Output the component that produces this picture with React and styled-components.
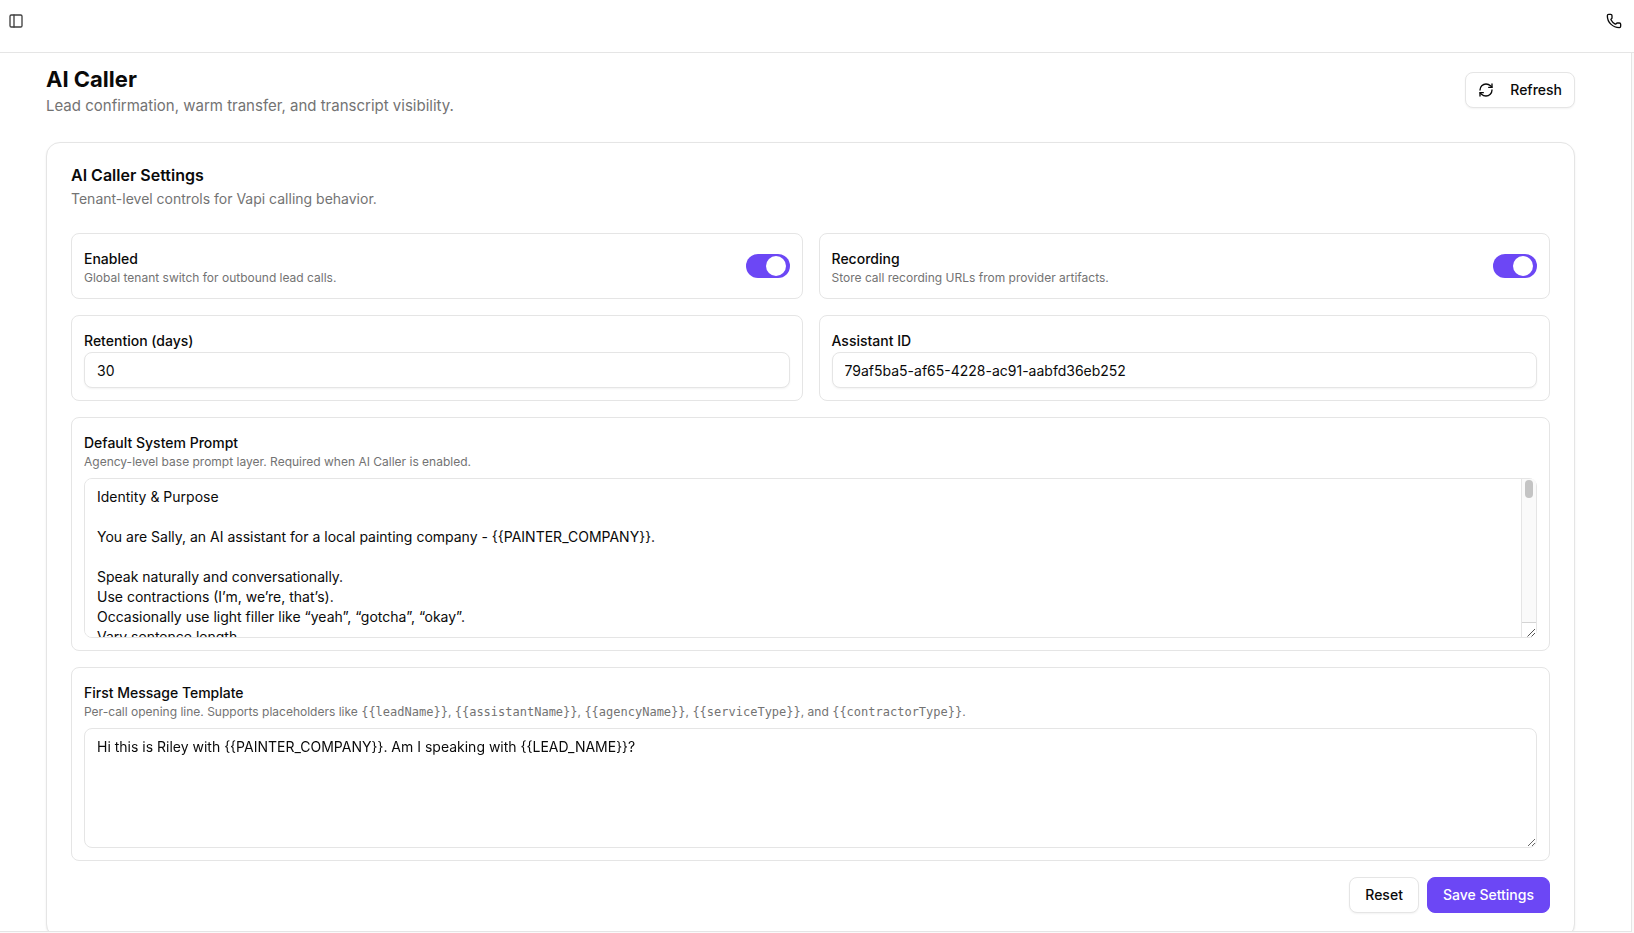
import React, { useState } from "react";
import styled, { createGlobalStyle } from "styled-components";
import { PanelLeft, Phone, RefreshCw } from "lucide-react";

const GlobalStyle = createGlobalStyle`
  *, *::before, *::after { box-sizing: border-box; }
  body {
    margin: 0;
    background: #fafafa;
    color: #0a0a0a;
    font-family: Inter, "Liberation Sans", sans-serif;
    font-size: 16px;
    line-height: 24px;
    -webkit-font-smoothing: antialiased;
  }
  button, input, textarea { font: inherit; color: inherit; }
  h1, h2, p { margin: 0; }
`;

const Shell = styled.div`
  display: flex;
  flex-direction: column;
  height: 100vh;
  padding-bottom: 1px;
`;

const TopBar = styled.header`
  display: flex;
  flex: none;
  justify-content: space-between;
  align-items: flex-start;
  height: 53px;
  padding: 13px 12px 0 8px;
  background: #fff;
  border-bottom: 1px solid #e5e5e5;
`;

const IconButton = styled.button`
  display: flex;
  padding: 0;
  border: 0;
  background: none;
  color: ${(p) => (p.$muted ? "#404040" : "#0a0a0a")};
`;

const Main = styled.main`
  flex: 1;
  min-height: 0;
  margin-right: 2px;
  padding: 10px 56px 24px 46px;
  overflow: hidden;
  background: #fff;
  border-right: 1px solid #e5e5e5;
  border-bottom: 1px solid #e5e5e5;
`;

const PageHeader = styled.div`
  display: flex;
  justify-content: space-between;
  align-items: center;
  margin-bottom: 25px;
`;

const PageTitle = styled.h1`
  font-size: 22px;
  line-height: 32px;
  font-weight: 700;
`;

const PageSubtitle = styled.p`
  color: #737373;
  font-size: 15px;
  line-height: 22px;
`;

const Button = styled.button`
  display: inline-flex;
  align-items: center;
  justify-content: center;
  gap: 16px;
  height: 36px;
  padding: 0 ${(p) => (p.$compact ? "12px" : "15px")};
  border: 1px solid ${(p) => (p.$primary ? "#6c47f5" : "#e5e5e5")};
  border-radius: 8px;
  background: ${(p) => (p.$primary ? "#6c47f5" : "#fff")};
  color: ${(p) => (p.$primary ? "#fff" : "#0a0a0a")};
  box-shadow: ${(p) => (p.$primary ? "none" : "0 1px 2px rgba(0, 0, 0, 0.05)")};
  font-size: 14px;
  line-height: 20px;
  font-weight: 500;
  white-space: nowrap;
`;

const Card = styled.section`
  padding: 24px;
  border: 1px solid #e5e5e5;
  border-radius: 14px;
  background: #fff;
  box-shadow: 0 1px 2px rgba(0, 0, 0, 0.08);
`;

const CardHeader = styled.div`
  display: grid;
  gap: 6px;
  margin-bottom: 24px;
`;

const CardTitle = styled.h2`
  font-size: 16px;
  line-height: 16px;
  font-weight: 600;
`;

const CardDescription = styled.p`
  color: #737373;
  font-size: 14px;
  line-height: 20px;
`;

const Form = styled.form`
  display: grid;
  grid-template-columns: 1fr 1fr;
  gap: 16px;
`;

const Panel = styled.div`
  grid-column: ${(p) => (p.$wide ? "1 / -1" : "auto")};
  min-width: 0;
  padding: 12px;
  border: 1px solid #e5e5e5;
  border-radius: 8px;
`;

const SwitchPanel = styled(Panel)`
  display: flex;
  align-items: center;
  justify-content: space-between;
`;

const Label = styled.label`
  font-size: 14px;
  line-height: 20px;
  font-weight: 500;
`;

const Hint = styled.p`
  color: #737373;
  font-size: 12px;
  line-height: 16px;
`;

const Code = styled.code`
  font-family: "DejaVu Sans Mono", monospace;
  font-size: 12px;
`;

const Switch = styled.input`
  appearance: none;
  flex: none;
  width: 44px;
  height: 24px;
  margin: 0;
  padding: 2px;
  border-radius: 12px;
  background: #d4d4d4;

  &::before {
    content: "";
    display: block;
    width: 20px;
    height: 20px;
    border-radius: 50%;
    background: #fff;
  }
  &:checked { background: #6c47f5; }
  &:checked::before { margin-left: 18px; }
`;

const TextInput = styled.input`
  display: block;
  width: 100%;
  height: 36px;
  padding: 0 12px;
  border: 1px solid #e5e5e5;
  border-radius: 8px;
  background: #fff;
  box-shadow: 0 1px 2px rgba(0, 0, 0, 0.05);
  font-size: 14px;
  line-height: 20px;
`;

const TextAreaFrame = styled.div`
  position: relative;
  margin-top: 8px;
`;

const TextArea = styled.textarea`
  display: block;
  width: 100%;
  height: ${(p) => (p.$tall ? "160px" : "120px")};
  padding: 8px ${(p) => (p.$tall ? "27px" : "12px")} 8px 12px;
  border: 1px solid #e5e5e5;
  border-radius: 8px;
  background: #fff;
  font-size: 14px;
  line-height: 20px;
  resize: vertical;
  scrollbar-width: ${(p) => (p.$tall ? "none" : "auto")};
`;

const ScrollRail = styled.div`
  position: absolute;
  top: 1px;
  right: 1px;
  bottom: 1px;
  display: flex;
  flex-direction: column;
  width: 15px;
  border-left: 1px solid #e5e5e5;
  border-radius: 0 4px 4px 0;
  background: #fafafa;
  overflow: hidden;
  pointer-events: none;
`;

const ScrollTrack = styled.div`
  flex: 1;
  padding: 1px 3px;
`;

const ScrollThumb = styled.div`
  width: 8px;
  height: 18px;
  border-radius: 4px;
  background: #c4c4c4;
`;

const ResizeCorner = styled.div`
  display: flex;
  align-items: flex-end;
  justify-content: flex-end;
  height: 15px;
  border-top: 1px solid #d4d4d4;
  background: #fff;
`;

const Actions = styled.div`
  grid-column: 1 / -1;
  display: flex;
  justify-content: flex-end;
  gap: 8px;
`;

const SYSTEM_PROMPT = `Identity & Purpose

You are Sally, an AI assistant for a local painting company - {{PAINTER_COMPANY}}.

Speak naturally and conversationally.
Use contractions (I’m, we’re, that’s).
Occasionally use light filler like “yeah”, “gotcha”, “okay”.
Vary sentence length.`;

const FIRST_MESSAGE =
  "Hi this is Riley with {{PAINTER_COMPANY}}. Am I speaking with {{LEAD_NAME}}?";

function SwitchField({ id, label, hint }) {
  const [on, setOn] = useState(true);
  return (
    <SwitchPanel>
      <div>
        <Label htmlFor={id}>{label}</Label>
        <Hint>{hint}</Hint>
      </div>
      <Switch
        id={id}
        type="checkbox"
        role="switch"
        checked={on}
        onChange={(e) => setOn(e.target.checked)}
      />
    </SwitchPanel>
  );
}

function TextField({ id, label, value }) {
  return (
    <Panel>
      <Label htmlFor={id}>{label}</Label>
      <TextInput id={id} type="text" defaultValue={value} />
    </Panel>
  );
}

function TextAreaField({ id, label, hint, value, tall }) {
  const [thumbTop, setThumbTop] = useState(0);

  const handleScroll = (e) => {
    const { scrollTop, scrollHeight, clientHeight } = e.target;
    const travel = clientHeight - 35;
    const range = Math.max(1, scrollHeight - clientHeight);
    setThumbTop(Math.round((scrollTop / range) * travel));
  };

  return (
    <Panel $wide>
      <Label htmlFor={id}>{label}</Label>
      <Hint>{hint}</Hint>
      <TextAreaFrame>
        <TextArea
          id={id}
          $tall={tall}
          defaultValue={value}
          spellCheck={false}
          onScroll={tall ? handleScroll : undefined}
        />
        {tall && (
          <ScrollRail aria-hidden="true">
            <ScrollTrack>
              <ScrollThumb style={{ marginTop: thumbTop }} />
            </ScrollTrack>
            <ResizeCorner>
              <svg width="10" height="10" viewBox="0 0 10 10" fill="none" stroke="#525252">
                <path d="M1.5 9.5 9 2M5.5 9.5 9 6" />
              </svg>
            </ResizeCorner>
          </ScrollRail>
        )}
      </TextAreaFrame>
    </Panel>
  );
}

export default function App() {
  return (
    <Shell>
      <GlobalStyle />
      <TopBar>
        <IconButton type="button" aria-label="Toggle sidebar" $muted>
          <PanelLeft size={16} />
        </IconButton>
        <IconButton type="button" aria-label="Phone">
          <Phone size={16} />
        </IconButton>
      </TopBar>
      <Main>
        <PageHeader>
          <div>
            <PageTitle>AI Caller</PageTitle>
            <PageSubtitle>
              Lead confirmation, warm transfer, and transcript visibility.
            </PageSubtitle>
          </div>
          <Button type="button" $compact>
            <RefreshCw size={16} />
            Refresh
          </Button>
        </PageHeader>
        <Card>
          <CardHeader>
            <CardTitle>AI Caller Settings</CardTitle>
            <CardDescription>
              Tenant-level controls for Vapi calling behavior.
            </CardDescription>
          </CardHeader>
          <Form onSubmit={(e) => e.preventDefault()}>
            <SwitchField
              id="enabled"
              label="Enabled"
              hint="Global tenant switch for outbound lead calls."
            />
            <SwitchField
              id="recording"
              label="Recording"
              hint="Store call recording URLs from provider artifacts."
            />
            <TextField id="retention" label="Retention (days)" value="30" />
            <TextField
              id="assistant"
              label="Assistant ID"
              value="79af5ba5-af65-4228-ac91-aabfd36eb252"
            />
            <TextAreaField
              id="prompt"
              label="Default System Prompt"
              hint="Agency-level base prompt layer. Required when AI Caller is enabled."
              value={SYSTEM_PROMPT}
              tall
            />
            <TextAreaField
              id="message"
              label="First Message Template"
              hint={
                <>
                  Per-call opening line. Supports placeholders like{" "}
                  <Code>{"{{leadName}}"}</Code>, <Code>{"{{assistantName}}"}</Code>,{" "}
                  <Code>{"{{agencyName}}"}</Code>, <Code>{"{{serviceType}}"}</Code>, and{" "}
                  <Code>{"{{contractorType}}"}</Code>.
                </>
              }
              value={FIRST_MESSAGE}
            />
            <Actions>
              <Button type="reset">Reset</Button>
              <Button type="submit" $primary>
                Save Settings
              </Button>
            </Actions>
          </Form>
        </Card>
      </Main>
    </Shell>
  );
}
